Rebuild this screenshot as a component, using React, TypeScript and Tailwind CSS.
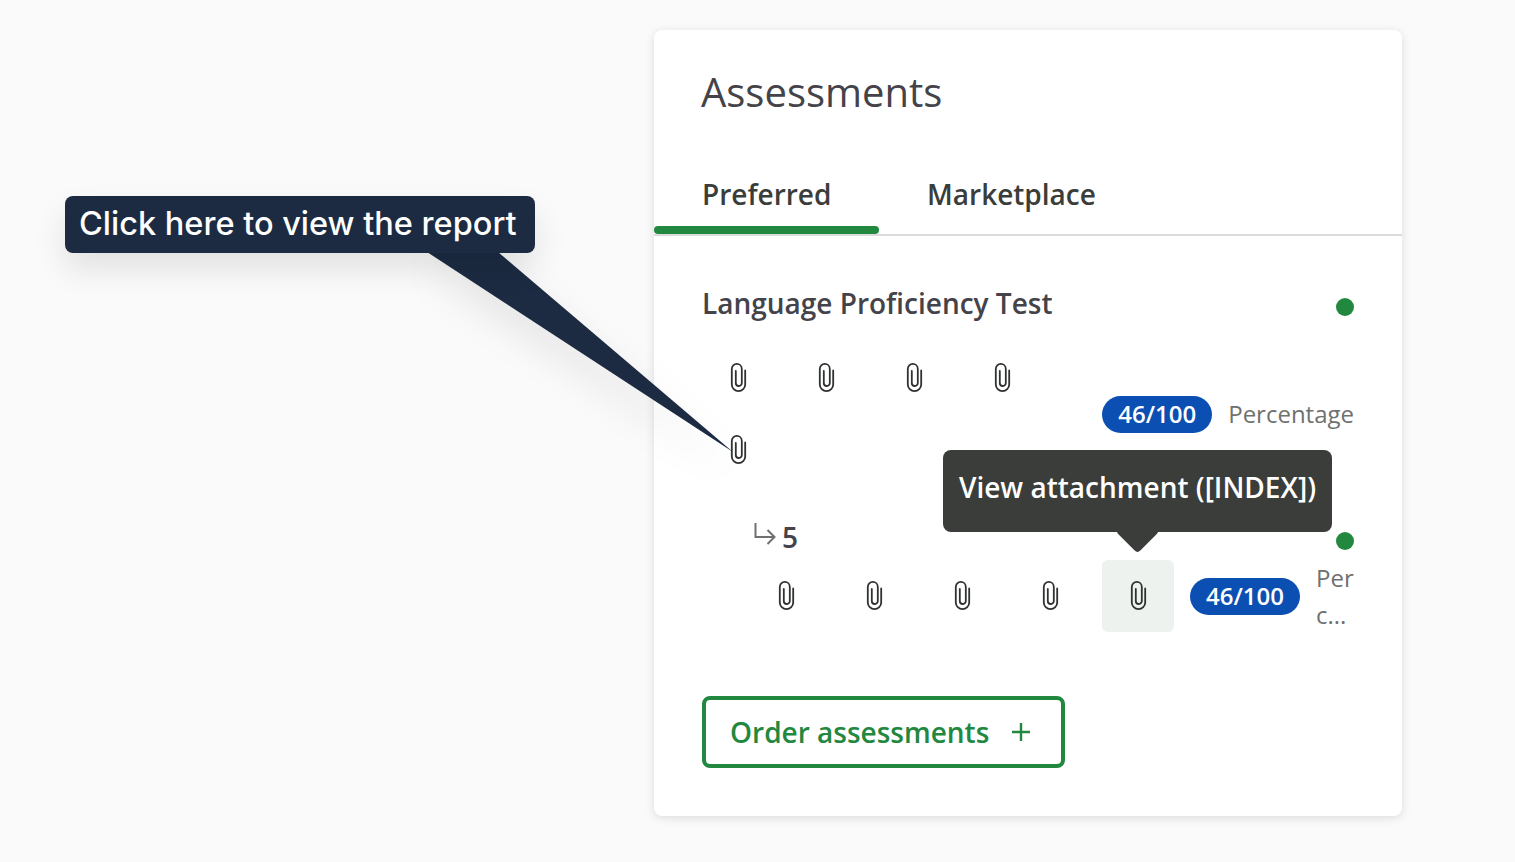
const FONT = "font-['Open_Sans',sans-serif]";

function Clip() {
  return (
    <svg width="18" height="32" viewBox="0 0 18 32" fill="none" aria-hidden>
      <path
        d="M16.2 8.5V22.4a6.7 6.7 0 0 1-13.4 0V6.9a5 5 0 0 1 10 0V21a3 3 0 0 1-6 0V9"
        stroke="#2f3230"
        strokeWidth="1.8"
        strokeLinecap="round"
      />
    </svg>
  );
}

function Attachment({ active }: { active?: boolean }) {
  return (
    <div
      className={`w-[72px] h-[72px] rounded-md flex items-center justify-center ${active ? "bg-[#eef2ee]" : ""}`}
    >
      <Clip />
    </div>
  );
}

function Badge() {
  return (
    <span className="h-[37px] w-[110px] shrink-0 rounded-full bg-[#0b4fb3] text-white text-[24px] font-semibold flex items-center justify-center">
      46/100
    </span>
  );
}

export default function App() {
  return (
    <div className={`relative h-[862px] overflow-hidden bg-[#fafafa] pl-[654px] pt-[30px] ${FONT}`}>
      <div className="w-[748px] h-[786px] bg-white rounded-lg shadow-[0_2px_10px_rgba(0,0,0,0.12)] flex flex-col">
        <h2 className="pl-[47px] pt-[34px] text-[40px] leading-[56px] text-[#45434a]">Assessments</h2>

        {/* Tabs */}
        <div className="mt-[34px] flex border-b-2 border-[#d9dcda] h-[82px] text-[28px] font-semibold text-[#3a3d3a]">
          <div className="relative w-[225px] pl-12 pt-[19px]">
            Preferred
            <span className="absolute left-0 right-0 bottom-0 h-2 rounded-full bg-[#23883f]" />
          </div>
          <div className="pl-12 pt-[19px]">Marketplace</div>
        </div>

        <div className="px-12 flex flex-col">
          <div className="mt-[47px] flex items-center justify-between h-[40px]">
            <span className="text-[28px] font-semibold text-[#45434a]">Language Proficiency Test</span>
            <span className="mt-[8px] w-[18px] h-[18px] rounded-full bg-[#23883f] shrink-0" />
          </div>

          <div className="mt-[19px] flex items-center justify-between">
            <div className="w-[400px] flex flex-wrap gap-x-4">
              <Attachment />
              <Attachment />
              <Attachment />
              <Attachment />
              <Attachment />
            </div>
            <div className="flex items-center gap-4">
              <Badge />
              <span className="text-[24px] text-[#6f716f]">Percentage</span>
            </div>
          </div>

          <div className="mt-[30px] flex items-center justify-between h-[42px] pl-[52px]">
            <div className="flex items-center gap-[6px]">
              <svg className="mb-[6px]" width="22" height="24" viewBox="0 0 22 24" fill="none" aria-hidden>
                <path d="M1.5 1v14h19M13.5 8l7 7-7 7" stroke="#6f716f" strokeWidth="2" />
              </svg>
              <span className="text-[28px] font-semibold text-[#45434a]">5</span>
            </div>
            <span className="mt-[8px] w-[18px] h-[18px] rounded-full bg-[#23883f] shrink-0" />
          </div>

          <div className="mt-[1px] flex items-center pl-12">
            <div className="flex gap-x-4">
              <Attachment />
              <Attachment />
              <Attachment />
              <Attachment />
              <Attachment active />
            </div>
            <div className="ml-4">
              <Badge />
            </div>
            <div className="ml-[16px] text-[24px] leading-[37px] text-[#6f716f]">
              Per
              <br />
              c...
            </div>
          </div>

          <button className="mt-[63px] w-[363px] h-[72px] rounded-lg border-4 border-[#23883f] flex items-center pl-[24px] text-[28px] font-semibold text-[#23883f]">
            Order assessments
            <svg className="ml-[22px]" width="20" height="20" viewBox="0 0 20 20" fill="none" aria-hidden>
              <path d="M10 1v18M1 10h18" stroke="#23883f" strokeWidth="2.4" />
            </svg>
          </button>
        </div>
      </div>

      {/* Attachment tooltip */}
      <div className="absolute left-[943px] top-[450px] w-[389px] h-[82px] pb-2 rounded-lg bg-[#3a3d3a] text-white text-[28px] font-semibold flex items-center justify-center whitespace-nowrap">
        View attachment ([INDEX])
        <span className="absolute left-[179px] -bottom-[15px] w-[31px] h-[31px] rotate-45 rounded-[4px] bg-[#3a3d3a]" />
      </div>

      {/* Callout pointer and label */}
      <svg className="absolute left-0 top-0 drop-shadow-[0_18px_18px_rgba(0,0,0,0.09)]" width="760" height="480" aria-hidden>
        <path d="M427 252L498 252L733 452Z" fill="#1c2b42" />
      </svg>
      <div className="absolute left-[65px] top-[196px] w-[470px] h-[57px] rounded-lg bg-[#1c2b42] shadow-[0_16px_32px_rgba(0,0,0,0.1)] text-white text-[32.5px] font-medium font-['Inter',sans-serif] flex items-center pl-[14px] whitespace-nowrap">
        Click here to view the report
      </div>
    </div>
  );
}
